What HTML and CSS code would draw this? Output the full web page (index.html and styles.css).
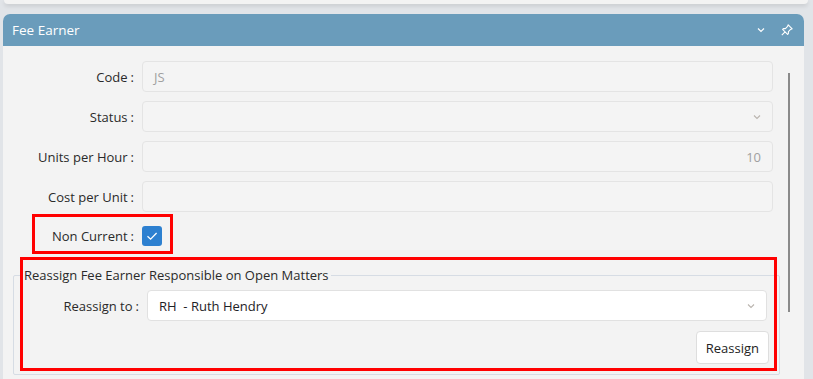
FILE: index.html
```html
<!DOCTYPE html>
<html lang="en">
<head>
  <meta charset="UTF-8" />
  <title>Fee Earner</title>
  <link rel="stylesheet" href="styles.css">
</head>
<body>
  <div class="prev-card"></div>

  <section class="panel">
    <header class="panel-head">
      <span class="panel-title">Fee Earner</span>
      <span class="panel-tools">
        <svg class="tool" viewBox="0 0 12 12" width="12" height="12"><path d="M3 4.5 L6 7.5 L9 4.5" fill="none" stroke="#fff" stroke-width="1.2"/></svg>
        <svg class="tool" viewBox="0 0 14 14" width="14" height="14"><path d="M8.2 1.8 L12.2 5.8 L10.6 6.4 L8.4 8.6 L8.4 10.6 L7.6 11.4 L2.6 6.4 L3.4 5.6 L5.4 5.6 L7.6 3.4 Z M5.1 8.9 L1.8 12.2" fill="none" stroke="#fff" stroke-width="1.1" stroke-linejoin="round"/></svg>
      </span>
    </header>

    <div class="panel-body">
      <div class="scroll-thumb"></div>

      <div class="form">
        <label class="lbl">Code<span class="colon">:</span></label>
        <div class="field muted">JS</div>

        <label class="lbl">Status<span class="colon">:</span></label>
        <div class="field select">
          <span></span>
          <svg class="chev" viewBox="0 0 12 12" width="12" height="12"><path d="M3 4.5 L6 7.5 L9 4.5" fill="none" stroke="#b9b4ae" stroke-width="1.1"/></svg>
        </div>

        <label class="lbl">Units per Hour<span class="colon">:</span></label>
        <div class="field muted num">10</div>

        <label class="lbl">Cost per Unit<span class="colon">:</span></label>
        <div class="field"></div>
      </div>

      <div class="check-row">
        <label class="lbl">Non Current<span class="colon">:</span></label>
        <span class="checkbox">
          <svg viewBox="0 0 20 20" width="20" height="20"><path d="M5.5 10.2 L8.6 13.2 L14.6 7" fill="none" stroke="#fff" stroke-width="1.3"/></svg>
        </span>
        <div class="mark mark-check"></div>
      </div>

      <fieldset class="group">
        <legend>Reassign Fee Earner Responsible on Open Matters</legend>
        <div class="group-row">
          <label class="lbl">Reassign to<span class="colon">:</span></label>
          <div class="field select white">
            <span class="value">RH&nbsp; - Ruth Hendry</span>
            <svg class="chev" viewBox="0 0 12 12" width="12" height="12"><path d="M3 4.5 L6 7.5 L9 4.5" fill="none" stroke="#b9b4ae" stroke-width="1.1"/></svg>
          </div>
        </div>
        <div class="actions">
          <button class="btn">Reassign</button>
        </div>
        <div class="mark mark-group"></div>
      </fieldset>
    </div>
  </section>
</body>
</html>
```

FILE: styles.css
```css
* {
  box-sizing: border-box;
  margin: 0;
  padding: 0;
}
body {
  font-family: 'Open Sans', 'Noto Sans', sans-serif;
  font-size: 13px;
  background: #e1e4e8;
  color: #222;
  height: 379px;
  overflow: hidden;
}
.prev-card {
  height: 4px;
  margin: 0 5px 0 4px;
  background: #f3f3f3;
  border-radius: 0 0 6px 6px;
  box-shadow: 0 2px 4px rgba(0, 0, 0, 0.12);
}
.panel {
  margin: 10px 9px 0 3px;
  border-radius: 7px 7px 0 0;
  background: #f3f3f3;
  height: 380px;
}
.panel-head {
  display: flex;
  align-items: center;
  justify-content: space-between;
  height: 32px;
  padding: 0 10px 0 9px;
  background: #6a9cbb;
  color: #fff;
  border-radius: 7px 7px 0 0;
}
.panel-title {
  font-size: 13.5px;
}
.panel-tools {
  display: flex;
  align-items: center;
  gap: 13px;
}
.tool {
  display: block;
}
.panel-body {
  position: relative;
  padding-top: 15px;
}
.scroll-thumb {
  position: absolute;
  left: 785px;
  top: 27px;
  width: 2px;
  height: 239px;
  background: #8a8a8a;
}
.form {
  display: grid;
  grid-template-columns: 131px 1fr;
  column-gap: 8px;
  row-gap: 9px;
  margin-right: 31px;
}
.lbl {
  display: flex;
  align-items: center;
  justify-content: flex-end;
  color: #2a2a2a;
  white-space: nowrap;
}
.colon {
  margin-left: 3px;
}
.field {
  display: flex;
  align-items: center;
  justify-content: space-between;
  height: 31px;
  padding: 0 11px 0 11px;
  border: 1px solid #e4e4e4;
  border-radius: 4px;
  background: #f4f4f4;
}
.muted {
  color: #a0a0a0;
}
.num {
  justify-content: flex-end;
}
.select {
  padding-right: 9px;
}
.chev {
  display: block;
}
.white {
  background: #fff;
  border-color: #e1e1e1;
}
.value {
  color: #1e2226;
}
.check-row {
  position: relative;
  display: grid;
  grid-template-columns: 131px 20px;
  column-gap: 8px;
  align-items: center;
  height: 20px;
  margin-top: 14px;
}
.checkbox {
  display: block;
  width: 20px;
  height: 20px;
  border-radius: 3px;
  background: #2d80d0;
}
.checkbox svg {
  display: block;
}
.mark {
  position: absolute;
  border: 3px solid #ff0000;
  pointer-events: none;
}
.mark-check {
  left: 29px;
  top: -12px;
  width: 141px;
  height: 40px;
}
.group {
  position: relative;
  margin: 20px 24px 0 10px;
  border: 1px solid #d6dce4;
  border-radius: 2px;
  padding: 6px 12px 10px 0;
}
.group legend {
  margin-left: 8px;
  padding: 0 2px;
  color: #2a2a2a;
}
.group-row {
  display: grid;
  grid-template-columns: 125px 1fr;
  column-gap: 8px;
}
.actions {
  display: flex;
  justify-content: flex-end;
  margin-top: 10px;
  margin-right: -2px;
}
.btn {
  height: 33px;
  padding: 0 9px;
  font: inherit;
  color: #222;
  background: #fff;
  border: 1px solid #dedede;
  border-radius: 4px;
}
.mark-group {
  left: 6px;
  top: -27px;
  right: 2px;
  bottom: 3px;
}
```
